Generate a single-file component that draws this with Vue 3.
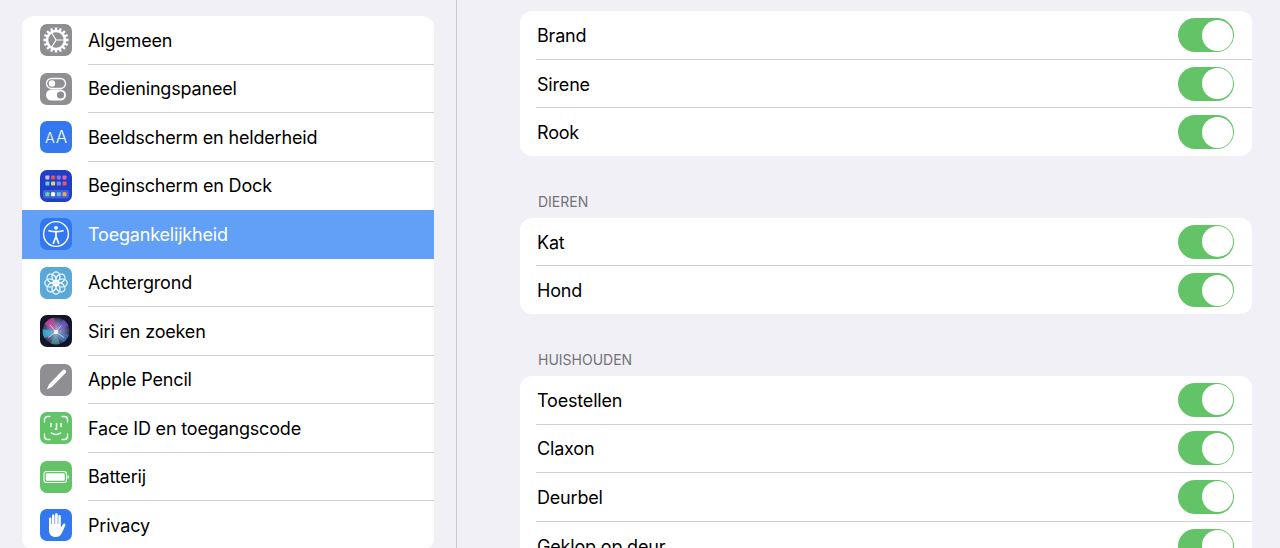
<script setup>
const menu = [
  { label: 'Algemeen', icon: 'gear' },
  { label: 'Bedieningspaneel', icon: 'switches' },
  { label: 'Beeldscherm en helderheid', icon: 'display' },
  { label: 'Beginscherm en Dock', icon: 'home' },
  { label: 'Toegankelijkheid', icon: 'access', active: true },
  { label: 'Achtergrond', icon: 'flower' },
  { label: 'Siri en zoeken', icon: 'siri' },
  { label: 'Apple Pencil', icon: 'pencil' },
  { label: 'Face ID en toegangscode', icon: 'face' },
  { label: 'Batterij', icon: 'battery' },
  { label: 'Privacy', icon: 'hand' },
]

const groups = [
  { title: '', items: ['Brand', 'Sirene', 'Rook'] },
  { title: 'DIEREN', items: ['Kat', 'Hond'] },
  { title: 'HUISHOUDEN', items: ['Toestellen', 'Claxon', 'Deurbel', 'Geklop op deur'] },
]

const gearTeeth = Array.from({ length: 16 }, (_, i) => i * 22.5)
const petals = [0, 45, 90, 135, 180, 225, 270, 315]
const homeDots = [
  ['#d9b8dc', '#e0565b', '#9a70e0', '#d868b8'],
  ['#6ac8f0', '#e8d05a', '#7a8ce0', '#e05a68'],
]
const dockDots = ['#72d0a0', '#ffffff', '#6ab8e8', '#e8a468']
</script>

<template>
  <div class="page">
    <aside class="sidebar">
      <ul class="menu">
        <li v-for="item in menu" :key="item.label" class="menu-row" :class="{ active: item.active }">
          <span class="icon" :class="'icon-' + item.icon">
            <svg v-if="item.icon === 'gear'" viewBox="0 0 32 32" width="32" height="32">
              <g fill="none" stroke="#fff">
                <circle cx="16" cy="16" r="9" stroke-width="2.6" />
                <path d="M16 16H25M16 16L11.500 8.200M16 16L11.500 23.800" stroke-width="1.200" />
                <path v-for="a in gearTeeth" :key="a" d="M16 3.400v3.400" stroke-width="2.400" :transform="`rotate(${a} 16 16)`" />
              </g>
            </svg>
            <svg v-else-if="item.icon === 'switches'" viewBox="0 0 32 32" width="32" height="32">
              <rect x="6.500" y="5.500" width="19" height="10" rx="5" fill="none" stroke="#fff" stroke-width="1.300" />
              <circle cx="12" cy="10.500" r="3.200" fill="#fff" />
              <rect x="6" y="16.500" width="20" height="11" rx="5.500" fill="#fff" />
              <circle cx="20.500" cy="22" r="3.600" fill="#8e8e93" />
            </svg>
            <span v-else-if="item.icon === 'display'" class="aa"><small>A</small>A</span>
            <svg v-else-if="item.icon === 'home'" viewBox="0 0 32 32" width="32" height="32">
              <g v-for="(row, r) in homeDots" :key="r">
                <rect v-for="(c, i) in row" :key="i" :x="5.400 + i * 5.700" :y="5.500 + r * 6" width="4" height="4" rx="0.700" :fill="c" />
              </g>
              <rect x="3" y="20" width="26" height="8.500" rx="2" fill="#3f62d4" />
              <rect v-for="(c, i) in dockDots" :key="c" :x="5.400 + i * 5.700" y="22.200" width="4" height="4" rx="0.700" :fill="c" />
            </svg>
            <svg v-else-if="item.icon === 'access'" viewBox="0 0 32 32" width="32" height="32">
              <circle cx="16" cy="16" r="12.400" fill="none" stroke="#fff" stroke-width="1.400" />
              <circle cx="16" cy="9.800" r="1.900" fill="#fff" />
              <path d="M9 12.800c4.600 1.200 9.400 1.200 14 0M16 14v5M16 18.500l-2.600 6.600M16 18.500l2.600 6.600" fill="none" stroke="#fff" stroke-width="1.700" stroke-linecap="round" />
            </svg>
            <svg v-else-if="item.icon === 'flower'" viewBox="0 0 32 32" width="32" height="32">
              <g fill="none" stroke="#fff" stroke-width="1.200">
                <ellipse v-for="a in petals" :key="a" cx="16" cy="9.800" rx="4" ry="5" :transform="`rotate(${a} 16 16)`" />
                <circle cx="16" cy="16" r="3" />
              </g>
            </svg>
            <svg v-else-if="item.icon === 'siri'" viewBox="0 0 32 32" width="32" height="32">
              <defs>
                <radialGradient id="siri-ball" cx="50%" cy="50%" r="52%">
                  <stop offset="0" stop-color="#b8b8d8" />
                  <stop offset="0.6" stop-color="#6a6a9c" />
                  <stop offset="1" stop-color="#2e2a52" />
                </radialGradient>
                <clipPath id="siri-clip"><circle cx="16" cy="16" r="13.500" /></clipPath>
              </defs>
              <circle cx="16" cy="16" r="13.500" fill="url(#siri-ball)" />
              <g clip-path="url(#siri-clip)">
                <path d="M16 17L3 8 5 3 14 3z" fill="#d8489c" opacity="0.7" />
                <path d="M16 17L3 24 2 14z" fill="#38c8e8" opacity="0.7" />
                <path d="M16 17L24 4 30 10z" fill="#7a58e0" opacity="0.6" />
                <path d="M16 17L30 20 24 29z" fill="#3a9ae0" opacity="0.5" />
                <path d="M16 17L20 30 10 30z" fill="#48d0a8" opacity="0.45" />
                <path d="M16 17L8 22.500M16 17L24 22.500M16 17L10 10M16 17L21 11" stroke="#fff" stroke-width="1" stroke-linecap="round" opacity="0.6" />
              </g>
              <circle cx="16" cy="17" r="2.200" fill="#fff" opacity="0.85" />
            </svg>
            <svg v-else-if="item.icon === 'pencil'" viewBox="0 0 32 32" width="32" height="32">
              <path d="M22.600 6.200c.9-.9 2.200-.9 3 0s.8 2-.1 2.900L11.800 23l-5 2.400 2.200-5.200z" fill="#fff" />
            </svg>
            <svg v-else-if="item.icon === 'face'" viewBox="0 0 32 32" width="32" height="32">
              <g fill="none" stroke="#fff" stroke-width="1.300" stroke-linecap="round">
                <path d="M4.500 10V7.500a3 3 0 0 1 3-3H10M22 4.500h2.500a3 3 0 0 1 3 3V10M27.500 22v2.500a3 3 0 0 1-3 3H22M10 27.500H7.500a3 3 0 0 1-3-3V22" />
                <path d="M11 11.500v3M21 11.500v3M16.500 11.500v5.500h-1.200M11.500 21c2.800 2 6.200 2 9 0" stroke-width="1.500" />
              </g>
            </svg>
            <svg v-else-if="item.icon === 'battery'" viewBox="0 0 32 32" width="32" height="32">
              <rect x="4" y="10.500" width="22.500" height="11" rx="2.600" fill="none" stroke="#fff" stroke-width="1.100" />
              <rect x="5.800" y="12.300" width="18.900" height="7.400" rx="1.200" fill="#fff" />
              <path d="M27.600 14v4c.9-.3 1.400-1 1.400-2s-.5-1.700-1.400-2z" fill="#fff" />
            </svg>
            <svg v-else-if="item.icon === 'hand'" viewBox="0 0 32 32" width="32" height="32">
              <path d="M9 9.800c0-1.900 2.400-1.900 2.400 0V15h.6V6.800c0-1.900 2.500-1.900 2.500 0V15h.6V5.600c0-1.900 2.600-1.900 2.600 0V15h.6V7.400c0-1.900 2.500-1.900 2.500 0v11.200l2-3.200c1.200-1.800 3.400-.6 2.500 1.200l-3.200 6.900C20.600 26.600 19 28 15.800 28 11.400 28 9 25.400 9 21z" fill="#fff" />
            </svg>
          </span>
          <span class="menu-label">{{ item.label }}</span>
        </li>
      </ul>
    </aside>

    <main class="detail">
      <section v-for="group in groups" :key="group.items[0]" class="group">
        <h2 v-if="group.title" class="group-title">{{ group.title }}</h2>
        <ul class="card">
          <li v-for="name in group.items" :key="name" class="row">
            <span class="row-label">{{ name }}</span>
            <span class="toggle"><span class="knob" /></span>
          </li>
        </ul>
      </section>
    </main>
  </div>
</template>

<style>
html, body {
  margin: 0;
  background: #f0f0f6;
  overflow: hidden;
}
</style>

<style scoped>
.page {
  display: flex;
  height: 548px;
  overflow: hidden;
  background: #f0f0f6;
  font-family: Inter, 'Liberation Sans', sans-serif;
  color: #000;
}

.sidebar {
  flex: none;
  box-sizing: border-box;
  width: 457px;
  padding: 16px 22px 0;
  border-right: 1px solid #c8c8cc;
}

.menu,
.card {
  list-style: none;
  margin: 0;
  padding: 0;
  background: #fff;
  border-radius: 12px;
  overflow: hidden;
}

.menu-row {
  display: flex;
  align-items: center;
  gap: 16px;
  box-sizing: border-box;
  height: 48.5px;
  padding-left: 18px;
}

.menu-label {
  flex: 1;
  align-self: stretch;
  display: flex;
  align-items: center;
  box-sizing: border-box;
  padding-top: 1px;
  font-size: 18px;
  letter-spacing: -0.18px;
  border-bottom: 1px solid #d0d0d4;
}

.menu-row:last-child .menu-label,
.menu-row.active .menu-label,
.menu-row:has(+ .active) .menu-label {
  border-bottom-color: transparent;
}

.menu-row.active {
  background: #62a0f8;
}

.menu-row.active .menu-label {
  color: #fff;
}

.icon {
  flex: none;
  width: 32px;
  height: 32px;
  border-radius: 7px;
  overflow: hidden;
  display: flex;
  align-items: center;
  justify-content: center;
}

.icon-gear,
.icon-switches,
.icon-pencil {
  background: #8e8e93;
}

.icon-display,
.icon-access,
.icon-hand {
  background: #3478f0;
}

.icon-home {
  background: #1f3fc8;
}

.icon-flower {
  background: #5aa8d8;
}

.icon-siri {
  background: #14142a;
}

.icon-face,
.icon-battery {
  background: #62c466;
}

.aa {
  color: #fff;
  font-size: 17px;
  font-weight: 300;
  line-height: 1;
}

.aa small {
  font-size: 14.5px;
  margin-right: 1px;
}

.detail {
  flex: 1;
  min-width: 0;
  padding: 11.3px 28px 0 63px;
}

.group + .group {
  margin-top: 36.7px;
}

.group-title {
  margin: 0 0 8px;
  padding-left: 18px;
  height: 17px;
  line-height: 18px;
  font-size: 14px;
  font-weight: 400;
  color: #737378;
}

.row {
  display: flex;
  align-items: center;
  justify-content: space-between;
  box-sizing: border-box;
  height: 48.5px;
  margin-left: 16px;
  padding-right: 18px;
  border-bottom: 1px solid #d0d0d4;
}

.row:last-child {
  height: 48px;
  border-bottom: 0;
}

.row-label {
  padding: 1px 0 0 1px;
  font-size: 18px;
  letter-spacing: -0.18px;
}

.toggle {
  display: flex;
  justify-content: flex-end;
  box-sizing: border-box;
  width: 56px;
  height: 34px;
  padding: 1.5px;
  border-radius: 17px;
  background: #62c466;
}

.knob {
  width: 31px;
  height: 31px;
  border-radius: 50%;
  background: #fff;
}
</style>
